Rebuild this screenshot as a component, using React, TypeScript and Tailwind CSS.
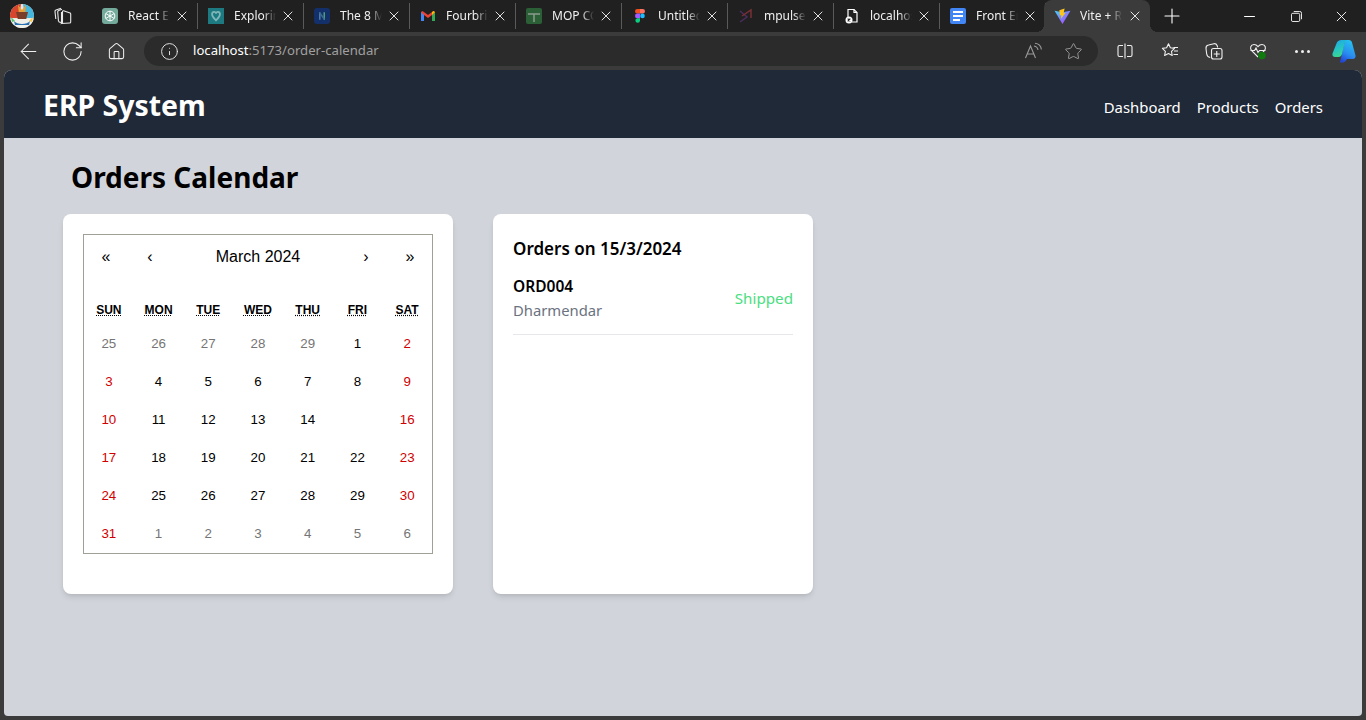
import { ArrowLeft, RotateCw, Home, Info, Star, Plus, X, Minus } from "lucide-react";
import type { ReactNode } from "react";

const uiFont = "font-['Noto_Sans',sans-serif]";

const Favicon = ({ kind }: { kind: string }) => {
  if (kind === "gpt")
    return (
      <div className="w-4 h-4 rounded-[3px] bg-[#74aa9c] flex items-center justify-center">
        <svg viewBox="0 0 16 16" className="w-3.5 h-3.5" fill="none" stroke="#fff" strokeWidth="1.1">
          <circle cx="8" cy="8" r="5.500" />
          <path d="M8 2.500v11M3.200 5.200l9.600 5.600M3.200 10.800l9.600-5.600" />
        </svg>
      </div>
    );
  if (kind === "explore")
    return (
      <div className="w-4 h-4 bg-[#1d7a80] flex items-center justify-center">
        <svg viewBox="0 0 16 16" className="w-3.5 h-3.5" fill="none" stroke="#7fb6ba" strokeWidth="2">
          <path d="M3.500 6c0-3.500 4.500-3.500 4.500-.5 0-3 4.500-3 4.500.5 0 3-2.500 5-4.500 7-2-2-4.500-4-4.500-7z" />
        </svg>
      </div>
    );
  if (kind === "eight")
    return (
      <div className="w-4 h-4 rounded-[3px] bg-[#14306b] flex items-center justify-center">
        <svg viewBox="0 0 16 16" className="w-3 h-3" fill="none" strokeWidth="2">
          <path d="M5 3v10" stroke="#4c7ea8" />
          <path d="M11 3v10" stroke="#4aa07a" />
          <path d="M5 4l6 8" stroke="#3a6a8c" />
        </svg>
      </div>
    );
  if (kind === "gmail")
    return (
      <svg viewBox="0 0 16 16" className="w-4 h-4" fill="none">
        <path d="M1 4v9h3V7l4 3 4-3v6h3V4l-1.500-1L8 7 2.500 3z" fill="#ea4335" />
        <path d="M1 4v9h3V7z" fill="#4285f4" />
        <path d="M15 4v9h-3V7z" fill="#34a853" />
        <path d="M12 7l3-3-1.500-1L12 4z" fill="#fbbc04" />
      </svg>
    );
  if (kind === "sheet")
    return (
      <div className="w-4 h-4 rounded-[2px] bg-[#2b5f36] flex items-center justify-center">
        <svg viewBox="0 0 16 16" className="w-4 h-4" fill="none" stroke="#8a9c8d" strokeWidth="1.500">
          <path d="M2 6h12M8 6v8" />
        </svg>
      </div>
    );
  if (kind === "figma")
    return (
      <svg viewBox="0 0 16 16" className="w-4 h-4">
        <path d="M5.300 1h2.700v4.600H5.300a2.300 2.300 0 0 1 0-4.600z" fill="#f24e1e" />
        <path d="M8 1h2.700a2.300 2.300 0 0 1 0 4.600H8z" fill="#ff7262" />
        <path d="M5.300 5.600H8v4.600H5.300a2.300 2.300 0 0 1 0-4.600z" fill="#a259ff" />
        <circle cx="10.500" cy="7.900" r="2.300" fill="#1abcfe" />
        <path d="M5.300 10.200H8v2.300a2.300 2.300 0 1 1-2.700-2.300z" fill="#0acf83" />
      </svg>
    );
  if (kind === "mpulse")
    return (
      <svg viewBox="0 0 16 16" className="w-4 h-4" fill="none" strokeWidth="1.500">
        <path d="M2 3l7 6-7 5" stroke="#4a2d5e" />
        <path d="M4 8l9-6v8" stroke="#7a2f35" />
      </svg>
    );
  if (kind === "file")
    return (
      <svg viewBox="0 0 16 16" className="w-4 h-4" fill="none" stroke="#fff" strokeWidth="1.200">
        <path d="M4 9V1.500h6l3 3V14H8" />
        <path d="M10 1.500v3h3" />
        <circle cx="5" cy="12" r="3.500" fill="#fff" stroke="none" />
        <path d="M3.700 10.700l2.600 2.600M6.300 10.700l-2.600 2.600" stroke="#222" />
      </svg>
    );
  if (kind === "doc")
    return (
      <div className="w-4 h-4 rounded-[2px] bg-[#4285f4] flex flex-col justify-center gap-[2px] px-[3px]">
        <div className="h-[2px] bg-white" />
        <div className="h-[2px] bg-white" />
        <div className="h-[2px] w-[7px] bg-white" />
      </div>
    );
  return (
    <svg viewBox="0 0 16 16" className="w-[17px] h-[17px] shrink-0">
      <defs>
        <linearGradient id="vite" x1="0" y1="0" x2="1" y2="1">
          <stop offset="0" stopColor="#41d1ff" />
          <stop offset="1" stopColor="#bd34fe" />
        </linearGradient>
      </defs>
      <path d="M0.500 2.500L8 15 15.500 2.500 8 4z" fill="url(#vite)" />
      <path d="M10 0.500L5 2l.5 5 1.500-.5-.5 3.500L11 4.500 9 5z" fill="#ffc517" />
    </svg>
  );
};

const tabs = [
  { kind: "gpt", title: "React Ef" },
  { kind: "explore", title: "Exploring" },
  { kind: "eight", title: "The 8 M" },
  { kind: "gmail", title: "Fourbrick" },
  { kind: "sheet", title: "MOP CC" },
  { kind: "figma", title: "Untitled" },
  { kind: "mpulse", title: "mpulse" },
  { kind: "file", title: "localhost" },
  { kind: "doc", title: "Front En" },
  { kind: "vite", title: "Vite + R", active: true },
];

const Tab = ({ kind, title, active }: { kind: string; title: string; active?: boolean }) => (
  <div
    className={`w-[106px] shrink-0 flex items-center pl-[10px] pr-[5px] ${
      active ? "relative -ml-[2px] h-8 self-end bg-[#3b3b3b] rounded-t-lg" : "h-[26px] border-r border-[#5a5a5a]"
    }`}
  >
    {active && (
      <>
        <div className="absolute bottom-0 -left-2 w-2 h-2 bg-[radial-gradient(circle_at_0_0,transparent_8px,#3b3b3b_8px)]" />
        <div className="absolute bottom-0 -right-2 w-2 h-2 bg-[radial-gradient(circle_at_100%_0,transparent_8px,#3b3b3b_8px)]" />
      </>
    )}
    <div className="w-4 h-4 shrink-0 flex items-center justify-center">
      <Favicon kind={kind} />
    </div>
    <div className="ml-[10px] w-[42px] overflow-hidden whitespace-nowrap text-[12px] text-[#f0f0f0] [mask-image:linear-gradient(to_right,black_70%,transparent)]">
      {title}
    </div>
    <X className="ml-auto mr-[2px] w-4 h-4 text-white" strokeWidth={1.3} />
  </div>
);

const ToolIcon = ({ children, className }: { children: ReactNode; className: string }) => (
  <div className={`shrink-0 flex items-center justify-center ${className}`}>{children}</div>
);

const Avatar = () => (
  <svg viewBox="0 0 24 24" className="ml-[10px] w-6 h-6 shrink-0">
    <defs>
      <clipPath id="avatar">
        <circle cx="12" cy="12" r="12" />
      </clipPath>
    </defs>
    <g clipPath="url(#avatar)">
      <rect width="24" height="24" fill="#e9e4df" />
      <path d="M0 0h11L9 14H0z" fill="#d8452f" />
      <path d="M13 0h11v14h-9z" fill="#46b6dd" />
      <path d="M8 1l4 5 4-5-1 9H9z" fill="#e8a13a" />
      <path d="M6 8h12l-2 8H8z" fill="#7a3d2a" />
      <path d="M0 15h24v9H0z" fill="#f1efe9" />
      <path d="M4 17c3 4 13 4 16 0l-1 4H5z" fill="#2a6fb0" />
      <path d="M1 13l4 4-3 1z" fill="#4fc06e" />
      <path d="M23 13l-4 4 3 1z" fill="#f3c64a" />
    </g>
  </svg>
);

const Workspaces = () => (
  <svg viewBox="0 0 18 18" className="ml-[20px] w-[18px] h-[18px]" fill="none" stroke="#e8e8e8" strokeWidth="1.100">
    <path d="M7.500 16.500l8.200-.5a1 1 0 0 0 1-1V7a1 1 0 0 0-.6-.9l-6.500-2.400a1 1 0 0 0-1.100.9v10.900z" />
    <path d="M4.500 14.500L3.700 5a1.500 1.500 0 0 1 1-1.600L8 2.300M1.800 12L1 4.500a1.500 1.500 0 0 1 1-1.600L7 1.200" />
    <path d="M7.500 5v10.500c-1.200 0-2.300-.4-3-1" />
  </svg>
);

const ReadAloud = () => (
  <svg viewBox="0 0 18 18" className="ml-auto w-[18px] h-[18px]" fill="none" stroke="#9a9a9a" strokeWidth="1.100">
    <path d="M1.500 16L6.500 4l5 12M3.200 12h6.600" />
    <path d="M10 4c2 .3 3.700 2 4 4M11 1.200c3.300.4 6 3 6.400 6.300" />
  </svg>
);

const SplitScreen = () => (
  <svg viewBox="0 0 18 18" className="w-[18px] h-[18px]" fill="none" stroke="#f0f0f0" strokeWidth="1.100">
    <path d="M7 3.500H3.500a1.500 1.500 0 0 0-1.500 1.500v8a1.500 1.500 0 0 0 1.500 1.500H7" />
    <path d="M11 3.500h3.500a1.500 1.500 0 0 1 1.500 1.500v8a1.500 1.500 0 0 1-1.500 1.500H11" />
    <path d="M9 1.500v15" />
  </svg>
);

const Favorites = () => (
  <svg viewBox="0 0 18 18" className="w-[18px] h-[18px]" fill="none" stroke="#f0f0f0" strokeWidth="1.100">
    <path d="M7.500 1.800l1.900 4 4.100.6-3 2.900.7 4.200-3.700-2-3.900 2 .8-4.200-3-2.900 4.200-.6z" strokeLinejoin="round" />
    <path d="M12.500 5.500H17M13 9h4M12.500 12.500H17" />
  </svg>
);

const Collections = () => (
  <svg viewBox="0 0 18 18" className="w-[18px] h-[18px]" fill="none" stroke="#f0f0f0" strokeWidth="1.100">
    <rect x="6.500" y="6.500" width="10.500" height="10.500" rx="2" />
    <path d="M11.750 9v6M8.800 12h6" />
    <path d="M5.200 15.500C3 15.200 2 14 1.700 12L1 6.500C.8 4.500 2 3.300 3.500 3L9 1.700c1.500-.3 2.800.5 3.300 2.300l.3 1.500" />
  </svg>
);

const Health = () => (
  <svg viewBox="0 0 18 18" className="w-[18px] h-[18px]" fill="none">
    <path
      d="M9 15l-6.300-6.300C.6 6.500 1.500 2.500 5 2.500c1.800 0 3 .9 4 2.200 1-1.300 2.200-2.200 4-2.200 3.500 0 4.400 4 2.300 6.200l-1.300 1.300"
      stroke="#f0f0f0"
      strokeWidth="1.100"
    />
    <path d="M1.500 8.500h4l1.500-2.500 2 4.500 1.500-2h6" stroke="#f0f0f0" strokeWidth="1.100" />
    <circle cx="13" cy="13.500" r="3.800" fill="#107c10" />
  </svg>
);

const Copilot = () => (
  <svg viewBox="0 0 24 24" className="w-[24px] h-[24px]">
    <defs>
      <linearGradient id="copA" x1="0.200" y1="0" x2="0.600" y2="1">
        <stop offset="0" stopColor="#1ea7e8" />
        <stop offset="0.550" stopColor="#27c6c0" />
        <stop offset="1" stopColor="#3edc85" />
      </linearGradient>
      <linearGradient id="copB" x1="0.700" y1="0" x2="0.300" y2="1">
        <stop offset="0" stopColor="#27c3f0" />
        <stop offset="0.600" stopColor="#2a8cf0" />
        <stop offset="1" stopColor="#2347d9" />
      </linearGradient>
    </defs>
    <path d="M14 1h3c1.500 0 2.700 1 3 2.500l3.500 13c.4 1.800-.8 3.500-2.700 3.500H15l-2 2.500c-.7.800-1.500 1-2.500 1H8l4-18C12.500 3 13 1 14 1z" fill="url(#copB)" />
    <path d="M9.500 1H15c-1.500.5-2 2-2.400 3.500L10 15c-.4 1.500-1.400 3-3.500 3H3c-1.800 0-3-1.500-2.500-3.500L4.500 4.500C5.200 2.300 7 1 9.500 1z" fill="url(#copA)" />
  </svg>
);

const BrowserChrome = () => (
  <div className={uiFont}>
    <div className="h-8 bg-[#202020] flex items-center">
      <Avatar />
      <Workspaces />
      <div className="ml-[20px] flex items-center self-stretch">
        {tabs.map((t) => (
          <Tab key={t.title} {...t} />
        ))}
      </div>
      <Plus className="ml-[10px] w-6 h-6 text-white" strokeWidth={1.1} />
      <Minus className="ml-[57px] w-[17px] h-[17px] text-white" strokeWidth={1.5} />
      <svg viewBox="0 0 12 12" className="ml-[33px] w-[11px] h-[11px]" fill="none" stroke="#fff" strokeWidth="1">
        <rect x="0.500" y="2.500" width="9" height="9" rx="1.500" />
        <path d="M3 .5h6.500a2 2 0 0 1 2 2V9" />
      </svg>
      <svg viewBox="0 0 12 12" className="ml-[34px] w-[11px] h-[11px]" fill="none" stroke="#fff" strokeWidth="1">
        <path d="M1 1l10 10M11 1L1 11" />
      </svg>
    </div>
    <div className="h-[38px] bg-[#3b3b3b] flex items-center">
      <ToolIcon className="ml-[18px] w-[20px]">
        <ArrowLeft className="w-[25px] h-[25px] shrink-0 text-[#f0f0f0]" strokeWidth={1} />
      </ToolIcon>
      <ToolIcon className="ml-[24px] w-[20px]">
        <RotateCw className="w-[23px] h-[23px] shrink-0 text-[#f0f0f0]" strokeWidth={1.1} />
      </ToolIcon>
      <ToolIcon className="ml-[24px] w-[20px]">
        <Home className="w-[19px] h-[19px] shrink-0 text-[#f0f0f0]" strokeWidth={1.3} />
      </ToolIcon>
      <div className="ml-[18px] w-[954px] h-[30px] rounded-full bg-[#2b2b2b] flex items-center">
        <Info className="ml-[16px] w-[19px] h-[19px] text-[#e8e8e8]" strokeWidth={1.2} />
        <div className="ml-[14px] text-[13.15px] text-[#a0a0a0]">
          <span className="text-white">localhost</span>:5173/order-calendar
        </div>
        <ReadAloud />
        <Star className="ml-[22px] mr-[15px] w-[19px] h-[19px] text-[#9a9a9a]" strokeWidth={1.2} />
      </div>
      <ToolIcon className="ml-[17px] w-[20px]">
        <SplitScreen />
      </ToolIcon>
      <ToolIcon className="ml-[25px] w-[20px]">
        <Favorites />
      </ToolIcon>
      <ToolIcon className="ml-[24px] w-[20px]">
        <Collections />
      </ToolIcon>
      <ToolIcon className="ml-[24px] w-[20px]">
        <Health />
      </ToolIcon>
      <ToolIcon className="ml-[24px] w-[20px]">
        <div className="flex gap-[3px]">
          <div className="w-[3px] h-[3px] rounded-full bg-[#f0f0f0]" />
          <div className="w-[3px] h-[3px] rounded-full bg-[#f0f0f0]" />
          <div className="w-[3px] h-[3px] rounded-full bg-[#f0f0f0]" />
        </div>
      </ToolIcon>
      <ToolIcon className="ml-[20px] w-[24px]">
        <Copilot />
      </ToolIcon>
    </div>
  </div>
);

const weekdays = ["SUN", "MON", "TUE", "WED", "THU", "FRI", "SAT"];

// 42 tiles, leading and trailing days belong to the neighbouring months
const days: { n: number; muted?: boolean }[] = [
  ...[25, 26, 27, 28, 29].map((n) => ({ n, muted: true })),
  ...Array.from({ length: 31 }, (_, i) => ({ n: i + 1 })),
  ...[1, 2, 3, 4, 5, 6].map((n) => ({ n, muted: true })),
];

const Calendar = () => (
  <div className="w-[350px] border border-[#a0a096] bg-white font-['Liberation_Sans',sans-serif]">
    <div className="h-11 mb-4 flex text-[16px] text-black">
      <button className="min-w-11">«</button>
      <button className="min-w-11">‹</button>
      <button className="grow">March 2024</button>
      <button className="min-w-11">›</button>
      <button className="min-w-11">»</button>
    </div>
    <div className="grid grid-cols-7 text-center text-[12px] leading-[13.5px] font-bold text-black">
      {weekdays.map((d) => (
        <div key={d} className="h-[30px] pt-[2px] flex items-center justify-center">
          <span className="underline decoration-dotted">{d}</span>
        </div>
      ))}
    </div>
    <div className="grid grid-cols-7 text-center text-[13.33px]">
      {days.map((d, i) => {
        const isWeekend = i % 7 === 0 || i % 7 === 6;
        const selected = !d.muted && d.n === 15;
        const color = d.muted ? "text-[#757575]" : isWeekend ? "text-[#d10000]" : "text-black";
        return (
          <div key={i} className={`h-[38px] flex items-center justify-center ${color}`}>
            {selected ? "" : d.n}
          </div>
        );
      })}
    </div>
  </div>
);

const App = () => (
  <div className="h-[720px] w-[1366px] overflow-hidden bg-[#3b3b3b] flex flex-col">
    <BrowserChrome />
    <div className={`mx-1 mb-1 grow rounded-t-lg rounded-b-sm overflow-hidden bg-[#d1d5db] ${uiFont}`}>
      <header className="h-[68px] bg-[#1f2937] pl-[39px] pr-[39px] flex items-center justify-between text-white">
        <div className="text-[28.4px] font-bold pt-[2px]">ERP System</div>
        <nav className="flex gap-4 pt-[5px] text-[14.9px] leading-6">
          <span>Dashboard</span>
          <span>Products</span>
          <span>Orders</span>
        </nav>
      </header>
      <main className="pl-[59px] pt-[21px]">
        <h1 className="ml-2 text-[28px] leading-9 font-bold text-black">Orders Calendar</h1>
        <div className="mt-[19px] flex gap-10">
          <div className="w-[390px] h-[380px] p-5 bg-white rounded-lg shadow-md">
            <Calendar />
          </div>
          <div className="w-[320px] h-[380px] p-5 bg-white rounded-lg shadow-md">
            <h2 className="pt-px text-[17px] leading-7 font-semibold text-black">Orders on 15/3/2024</h2>
            <div className="mt-[11px] pb-3 flex items-center justify-between border-b border-[#e5e7eb]">
              <div>
                <div className="text-[15.5px] leading-6 font-semibold text-black">ORD004</div>
                <div className="text-[14.8px] leading-6 text-[#6b7280]">Dharmendar</div>
              </div>
              <div className="text-[15.2px] text-[#4ade80]">Shipped</div>
            </div>
          </div>
        </div>
      </main>
    </div>
  </div>
);

export default App;
